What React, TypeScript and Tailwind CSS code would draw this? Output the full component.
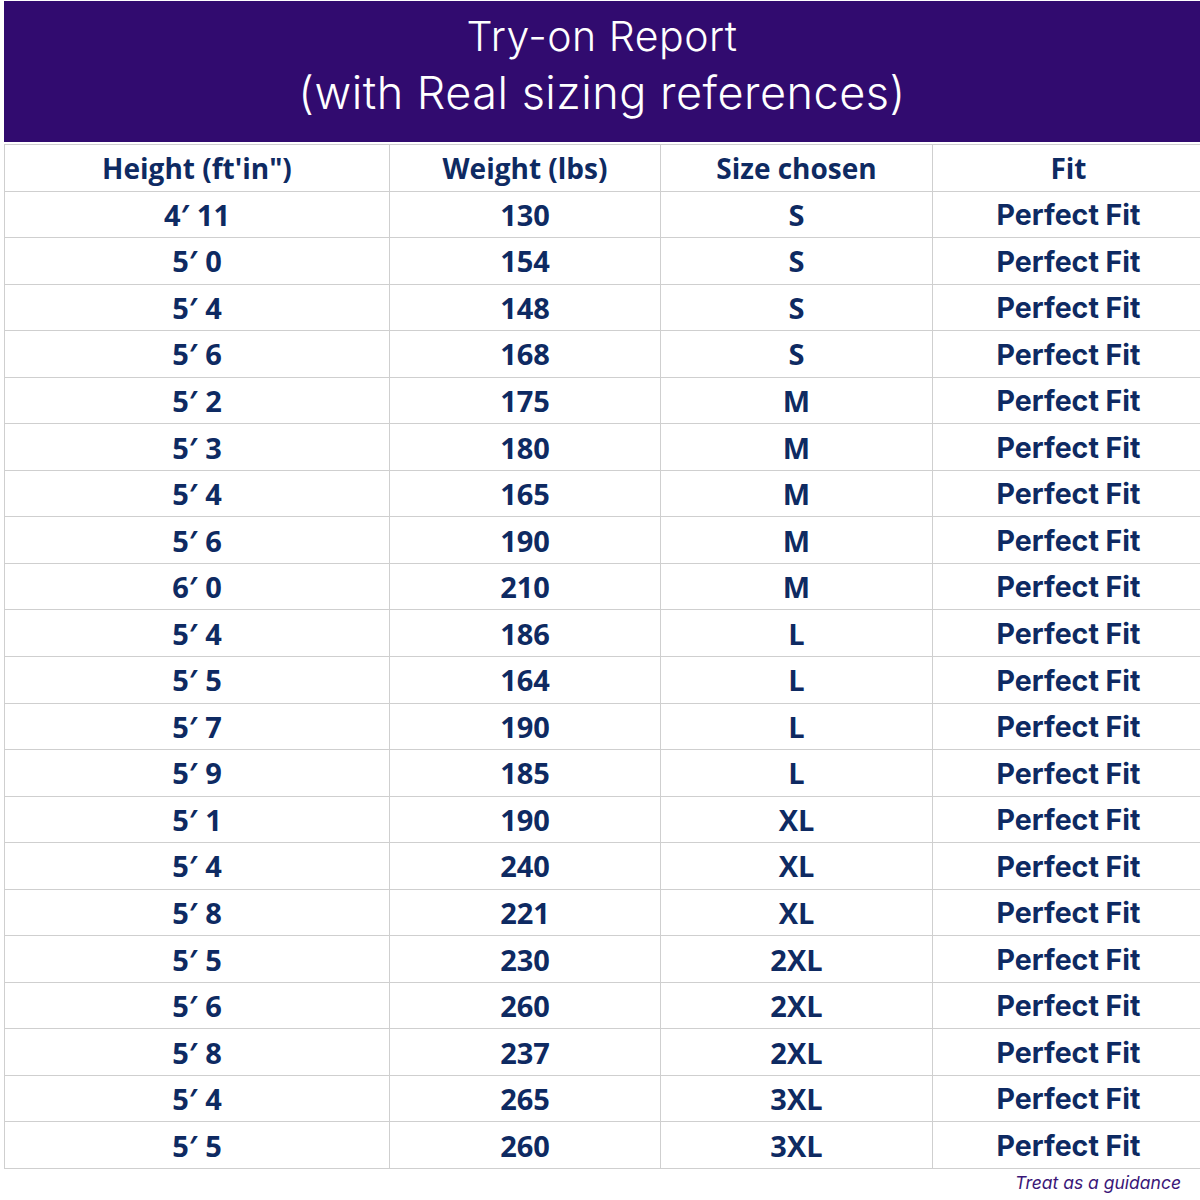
const rows: [string, string, string][] = [
  ['4′ 11', '130', 'S'],
  ['5′ 0', '154', 'S'],
  ['5′ 4', '148', 'S'],
  ['5′ 6', '168', 'S'],
  ['5′ 2', '175', 'M'],
  ['5′ 3', '180', 'M'],
  ['5′ 4', '165', 'M'],
  ['5′ 6', '190', 'M'],
  ['6′ 0', '210', 'M'],
  ['5′ 4', '186', 'L'],
  ['5′ 5', '164', 'L'],
  ['5′ 7', '190', 'L'],
  ['5′ 9', '185', 'L'],
  ['5′ 1', '190', 'XL'],
  ['5′ 4', '240', 'XL'],
  ['5′ 8', '221', 'XL'],
  ['5′ 5', '230', '2XL'],
  ['5′ 6', '260', '2XL'],
  ['5′ 8', '237', '2XL'],
  ['5′ 4', '265', '3XL'],
  ['5′ 5', '260', '3XL'],
]

const cell = 'border border-[#cfcfcf] text-center align-middle p-0 leading-none'

export default function App() {
  return (
    <div className="w-[1200px] h-[1200px] bg-white overflow-hidden font-['Open_Sans',sans-serif]">
      <div className="ml-[4px] mt-[1px] h-[141px] bg-[#310b6f] flex flex-col items-center pt-[8px] text-white font-['Inter',sans-serif] font-light">
        <div className="text-[41px] leading-[54px] tracking-[0.5px]">Try-on Report</div>
        <div className="text-[45px] leading-[60px] tracking-[0.5px]">(with Real sizing references)</div>
      </div>
      <table className="ml-[4px] mt-[2px] w-[1200px] border-collapse table-fixed text-[#0e2a62] font-bold text-[29px]">
        <colgroup>
          <col className="w-[385px]" />
          <col className="w-[271px]" />
          <col className="w-[272px]" />
          <col className="w-[272px]" />
        </colgroup>
        <thead>
          <tr className="h-[46.55px]">
            <th className={`${cell} text-[28px]`}>Height (ft'in")</th>
            <th className={`${cell} text-[28px]`}>Weight (lbs)</th>
            <th className={`${cell} text-[28px]`}>Size chosen</th>
            <th className={`${cell} text-[28px]`}>Fit</th>
          </tr>
        </thead>
        <tbody>
          {rows.map(([h, w, s], i) => (
            <tr key={i} className="h-[46.55px]">
              <td className={cell}>{h}</td>
              <td className={cell}>{w}</td>
              <td className={cell}>{s}</td>
              <td className={`${cell} font-['Inter',sans-serif] text-[28.5px] pt-[2px]`}>Perfect Fit</td>
            </tr>
          ))}
        </tbody>
      </table>
      <div className="pr-[19px] pt-[1px] text-right italic text-[17.5px] text-[#3a1678] font-['Inter',sans-serif]">
        Treat as a guidance
      </div>
    </div>
  )
}
